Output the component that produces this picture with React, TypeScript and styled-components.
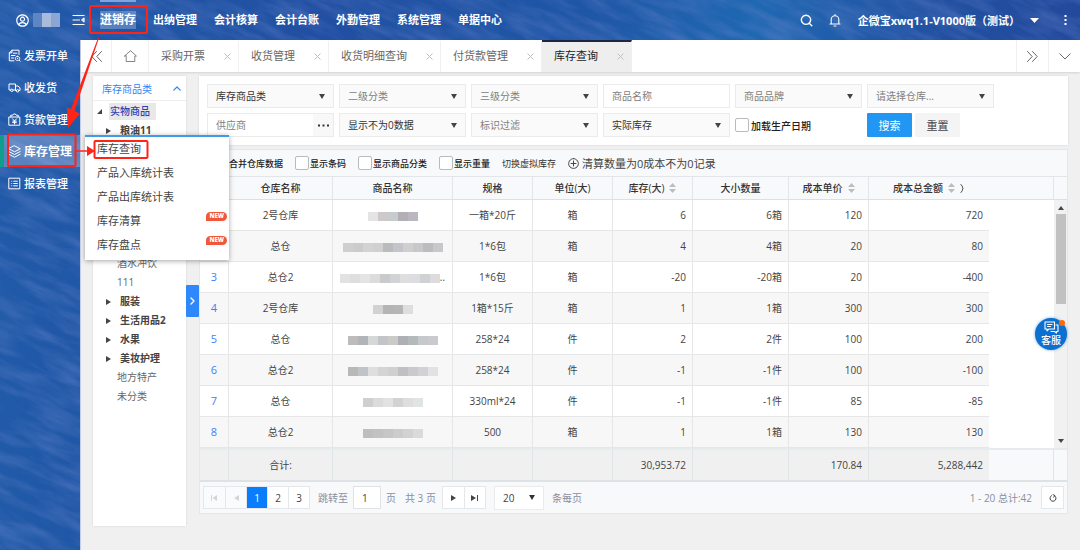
import React from "react";
import styled, { createGlobalStyle, css } from "styled-components";

const Global = createGlobalStyle`
  *, *::before, *::after { box-sizing: border-box; }
  body { margin: 0; background: #f0f0f0; }
  body, button, input, select { font-family: "Open Sans", "Noto Sans CJK SC", sans-serif; font-size: 10px; color: #444; }
  button, input, select { margin: 0; padding: 0; border: 0; border-radius: 0; background: none; outline: none; }
  ul { list-style: none; margin: 0; padding: 0; }
  a { color: inherit; text-decoration: none; }
  svg { display: block; flex: none; }
`;

/* ---------- shell ---------- */
const Shell = styled.div`
  position: relative;
  min-height: 100vh;
  display: flex;
  flex-direction: column;
  overflow: hidden;
`;
const Backdrop = styled.svg`
  position: absolute;
  inset: 0;
  width: 100%;
  height: 100%;
`;
const Header = styled.header`
  position: relative;
  height: 40px;
  display: flex;
  align-items: center;
  padding: 0 10px 0 16px;
  color: #fff;
  font-size: 11px;
  font-weight: 700;
`;
const IconButton = styled.button<{ $gap?: number }>`
  display: flex;
  color: inherit;
  margin-left: ${(p) => p.$gap ?? 0}px;
`;
const UserName = styled.span`
  display: flex;
  margin: 0 12px 0 4px;
`;
const Nav = styled.nav`
  flex: 1;
  display: flex;
  align-items: center;
  gap: 17px;
  margin-left: 15px;
  height: 100%;
`;
const NavLink = styled.a<{ $active?: boolean }>`
  display: flex;
  align-items: center;
  height: 100%;
  white-space: nowrap;
  line-height: 18px;
  ${(p) =>
    p.$active &&
    css`
      font-size: 12px;
      border-top: 2px solid #7fa3dc;
      padding-bottom: 2px;
      span { background: rgba(150, 180, 225, 0.45); }
    `}
`;
const Account = styled.button`
  display: flex;
  align-items: center;
  gap: 10px;
  margin: 0 22px 0 17px;
  color: #fff;
  font-size: 11px;
  font-weight: 700;
  white-space: nowrap;
`;
const Body = styled.div`
  position: relative;
  flex: 1;
  display: flex;
`;
const Sidebar = styled.nav`
  position: relative;
  z-index: 2;
  width: 80px;
  flex: none;
  margin-top: -1px;
`;
const SideLink = styled.a<{ $active?: boolean }>`
  display: flex;
  align-items: center;
  gap: 3px;
  height: 32px;
  padding-left: 8px;
  color: #fff;
  font-size: 11px;
  font-weight: 500;
  white-space: nowrap;
  ${(p) =>
    p.$active &&
    css`
      padding-left: 4px;
      border-left: 4px solid #0f9d8c;
      background: rgba(255, 255, 255, 0.25);
      font-size: 12px;
      font-weight: 700;
    `}
`;
const Flyout = styled.ul`
  position: absolute;
  left: 85px;
  top: 96px;
  width: 144px;
  padding-bottom: 3px;
  background: #fff;
  border-top: 2px solid #3f9be6;
  box-shadow: 0 1px 5px rgba(0, 0, 0, 0.35);
`;
const FlyoutLink = styled.a`
  display: flex;
  justify-content: space-between;
  align-items: center;
  height: 24px;
  padding: 0 2px 2px 12px;
  font-size: 11px;
  color: #444;
`;
const NewBadge = styled.span`
  height: 9px;
  margin-bottom: 8px;
  padding: 0 3px;
  border-radius: 5px 5px 5px 0;
  background: #f0573a;
  color: #fff;
  font-size: 6px;
  line-height: 9px;
  font-weight: 800;
`;

/* ---------- tabs ---------- */
const Main = styled.main`
  flex: 1;
  min-width: 0;
  background: #f0f0f0;
  border-left: 1px solid #c5cfe4;
`;
const TabBar = styled.div`
  display: flex;
  height: 32px;
  background: #fff;
  box-shadow: 0 1px 2px rgba(0, 0, 0, 0.12);
`;
const TabTool = styled.button<{ $width: number; $side: "left" | "right" }>`
  width: ${(p) => p.$width}px;
  display: flex;
  align-items: center;
  justify-content: center;
  color: #666;
  border-${(p) => p.$side}: 1px solid #f0f0f0;
`;
const Tab = styled.div<{ $active?: boolean }>`
  display: flex;
  align-items: center;
  gap: 19px;
  padding: 0 7px 2px 12px;
  border-right: 1px solid #f0f0f0;
  border-top: 2px solid ${(p) => (p.$active ? "#20263f" : "transparent")};
  background: ${(p) => (p.$active ? "#eee" : "#fff")};
  color: ${(p) => (p.$active ? "#222" : "#666")};
  font-size: 11px;
  line-height: 16px;
  white-space: nowrap;
  button { color: #c0c0c0; padding: 0; }
`;
const Grow = styled.div`
  flex: 1;
`;

/* ---------- work area ---------- */
const Work = styled.div`
  display: flex;
  align-items: flex-start;
  padding: 4px 12px 0;
`;
const Tree = styled.aside`
  width: 93px;
  flex: none;
  height: 450px;
  background: #fff;
  box-shadow: 0 0 2px rgba(0, 0, 0, 0.12);
`;
const TreeHead = styled.button`
  width: 100%;
  height: 25px;
  display: flex;
  align-items: center;
  justify-content: space-between;
  padding: 0 5px 0 9px;
  border-bottom: 1px solid #eee;
  color: #2f86f6;
`;
const TreeRow = styled.li<{ $kind: "root" | "branch" | "leaf" }>`
  height: 19px;
  display: flex;
  align-items: center;
  line-height: 17px;
  padding-left: ${(p) => ({ root: 4, branch: 13, leaf: 24 })[p.$kind]}px;
  gap: ${(p) => (p.$kind === "root" ? 7 : 9)}px;
  font-weight: ${(p) => (p.$kind === "branch" ? 700 : 400)};
  color: ${(p) => (p.$kind === "leaf" ? "#666" : "#444")};
`;
const TreeList = styled.ul`
  padding-top: 1px;
`;
const Selected = styled.span`
  padding: 0 6px 0 1px;
  background: #e8e8e8;
  color: #3240b4;
  font-weight: 500;
`;
const TreeGap = styled.li`
  height: 114px;
`;
const Expander = styled.button`
  width: 13px;
  height: 32px;
  flex: none;
  margin-top: 209px;
  display: flex;
  align-items: center;
  justify-content: center;
  background: #2f88fb;
  color: #fff;
  border-radius: 1px;
`;
const Content = styled.div`
  flex: 1;
  min-width: 0;
`;
const Filters = styled.form`
  display: grid;
  grid-template-columns: repeat(6, 127px);
  column-gap: 5px;
  row-gap: 5px;
  padding: 8px;
  background: #fff;
  box-shadow: 0 0 2px rgba(0, 0, 0, 0.12);
`;
const FieldBox = styled.div<{ $plain?: boolean }>`
  position: relative;
  height: 24px;
  display: flex;
  align-items: center;
  border: 1px solid #ebebeb;
  background: ${(p) => (p.$plain ? "#fff" : "#fafafa")};
  select, input { flex: 1; min-width: 0; height: 100%; padding-left: 8px; appearance: none; }
  input::placeholder { color: #808080; opacity: 1; }
  > svg { position: absolute; right: 8px; pointer-events: none; }
`;
const FilterSelect = styled.select<{ $muted?: boolean }>`
  color: ${(p) => (p.$muted ? "#808080" : "#333")};
`;
const MoreButton = styled.button`
  width: 20px;
  height: 100%;
  display: flex;
  align-items: center;
  justify-content: center;
  background: #f8f8f8;
  color: #333;
`;
const CheckLabel = styled.label<{ $large?: boolean }>`
  display: flex;
  align-items: center;
  gap: ${(p) => (p.$large ? 2 : 1)}px;
  font-size: ${(p) => (p.$large ? 10 : 9)}px;
  font-weight: 500;
  color: #222;
  white-space: nowrap;
`;
const Check = styled.input`
  appearance: none;
  width: 14px;
  height: 14px;
  border: 1px solid #bbb;
  border-radius: 2px;
  background: #fff;
`;
const Actions = styled.div`
  display: flex;
  gap: 3px;
`;
const Action = styled.button<{ $primary?: boolean }>`
  width: 45px;
  height: 24px;
  border-radius: 1px;
  font-size: 11px;
  background: ${(p) => (p.$primary ? "#2196f3" : "#f4f4f4")};
  color: ${(p) => (p.$primary ? "#fff" : "#444")};
`;

/* ---------- grid ---------- */
const Card = styled.section`
  margin-top: 4px;
  border: 1px solid #e3e7ea;
  background: #f8f9fb;
`;
const Toolbar = styled.div`
  height: 26px;
  display: flex;
  align-items: center;
  gap: 12px;
  padding-left: 14px;
`;
const TextButton = styled.button`
  font-size: 9px;
  color: #333;
`;
const ClearButton = styled.button`
  display: flex;
  align-items: center;
  gap: 3px;
  font-size: 11px;
  color: #444;
  white-space: nowrap;
`;
const Grid = styled.table`
  width: 100%;
  table-layout: fixed;
  border-collapse: separate;
  border-spacing: 0;
`;
const Th = styled.th<{ $edge?: boolean }>`
  height: 24px;
  padding: 0;
  border-top: 1px solid #e2e6ea;
  border-bottom: 1px solid #dcdfe3;
  border-right: ${(p) => (p.$edge ? "0" : "1px solid #e2e6ea")};
  background: #f8f9fa;
  font-weight: 500;
  color: #333;
`;
const ThInner = styled.span`
  display: flex;
  align-items: center;
  justify-content: center;
  gap: 5px;
  line-height: 14px;
`;
type Align = "center" | "right";
const Td = styled.td<{ $align?: Align; $edge?: boolean; $odd?: boolean }>`
  height: 31px;
  padding: 0 6px;
  text-align: ${(p) => p.$align ?? "center"};
  border-right: ${(p) => (p.$edge ? "0" : "1px solid #e4e6e8")};
  border-bottom: 1px solid #e6e6e6;
  background: ${(p) => (p.$odd ? "#f7f7f7" : "#fff")};
  line-height: 14px;
`;
const IndexTd = styled(Td)`
  color: #3f7ff5;
  font-size: 11px;
`;
const Blank = styled.td`
  background: #fff;
  padding: 0;
`;
const ScrollCell = styled.td`
  padding: 0;
  background: #f1f1f1;
  vertical-align: top;
`;
const ScrollTrack = styled.div`
  height: 248px;
  display: flex;
  flex-direction: column;
  align-items: center;
  padding: 6px 0 5px;
`;
const Thumb = styled.div`
  width: 10px;
  height: 90px;
  margin: 4px 0 auto;
  background: #c1c1c1;
`;
const FootTd = styled.td<{ $align?: Align; $edge?: boolean; $light?: boolean }>`
  height: 34px;
  padding: 0 6px;
  text-align: ${(p) => p.$align ?? "center"};
  border-top: 2px solid #e6ebed;
  border-bottom: 2px solid #dfe2e4;
  border-right: ${(p) => (p.$edge ? "0" : "1px solid #e0e5e8")};
  background: ${(p) => (p.$light ? "#f8f9fb" : "#f0f0f0")};
  line-height: 14px;
`;
const Mosaic = styled.span`
  display: inline-flex;
  vertical-align: middle;
`;
const Tile = styled.span<{ $c: string; $h?: number }>`
  width: ${(p) => (p.$h ? 9 : 10)}px;
  height: ${(p) => p.$h ?? 9}px;
  background: ${(p) => p.$c};
`;

/* ---------- pager ---------- */
const Pager = styled.footer`
  height: 31px;
  display: flex;
  align-items: center;
  padding: 0 3px;
  color: #8a8fa0;
  white-space: nowrap;
`;
const PageGroup = styled.div`
  display: flex;
  border: 1px solid #e5e8eb;
  background: #fff;
`;
const PageButton = styled.button<{ $active?: boolean }>`
  width: 21px;
  height: 21px;
  display: flex;
  align-items: center;
  justify-content: center;
  color: ${(p) => (p.$active ? "#fff" : "#444")};
  background: ${(p) => (p.$active ? "#0a7dfc" : "#fff")};
  & + & { border-left: 1px solid #e5e8eb; }
  &:disabled { color: #d5d5d5; background: #fafbfc; }
`;
const Jump = styled.label`
  display: flex;
  align-items: center;
  gap: 5px;
  margin: 0 9px 0 8px;
`;
const JumpInput = styled.input`
  width: 28px;
  height: 23px;
  padding-left: 8px;
  border: 1px solid #e0e3e6;
  background: #fff;
`;
const SizeLabel = styled.label`
  display: flex;
  align-items: center;
  gap: 8px;
  margin-left: 8px;
`;
const SizeBox = styled(FieldBox)`
  width: 50px;
  background: #fff;
  color: #333;
`;
const TotalPages = styled.span`
  margin-right: 6px;
`;
const Range = styled.span`
  margin: 0 9px 0 auto;
`;

/* ---------- overlays ---------- */
const Service = styled.button`
  position: absolute;
  right: 13px;
  top: 318px;
  width: 32px;
  height: 32px;
  border-radius: 50%;
  background: #0b70cf;
  box-shadow: 0 0 3px rgba(11, 112, 207, 0.6);
  color: #fff;
  font-size: 10px;
  line-height: 12px;
  font-weight: 500;
  display: flex;
  flex-direction: column;
  align-items: center;
  padding-top: 3px;
`;
const Dot = styled.span`
  position: absolute;
  top: 2px;
  right: 2px;
  width: 6px;
  height: 6px;
  border-radius: 50%;
  background: #ff6a00;
`;
const Marks = styled.svg`
  position: absolute;
  left: 0;
  top: 0;
  z-index: 5;
  pointer-events: none;
`;

/* ---------- icons ---------- */
const Stroke = ({ w, h, d, sw = 1 }: { w: number; h: number; d: string; sw?: number }) => (
  <svg width={w} height={h} viewBox={`0 0 ${w} ${h}`} fill="none" stroke="currentColor" strokeWidth={sw} strokeLinecap="round" strokeLinejoin="round" aria-hidden="true">
    <path d={d} />
  </svg>
);
const Fill = ({ w, h, d }: { w: number; h: number; d: string }) => (
  <svg width={w} height={h} viewBox={`0 0 ${w} ${h}`} fill="currentColor" aria-hidden="true">
    <path d={d} />
  </svg>
);
const Caret = () => <Fill w={6} h={5} d="M0 0H6L3 5Z" />;
const Sort = () => (
  <svg width="7" height="10" viewBox="0 0 7 10" fill="#bdbdbd" aria-hidden="true">
    <path d="M0 4L3.5 0L7 4ZM0 6H7L3.5 10Z" />
  </svg>
);

const sideItems = [
  { label: "发票开单", d: "M11 5.500V1.200H4L1.300 3.800V11.800H6M4 1.200V3.800H1.300M5.500 4.200H9M3.500 6.500H7M3.500 9H5.500M9.500 7.200a2.200 2.200 0 1 0 .01 0M9.500 9.200v.4M11.200 11.200l1 1" },
  { label: "收发货", d: "M2.500 9H1V3h6.500v6H5M7.500 5h2.600l1.900 2v2.500h-1.200M7.500 9.500H8.400M2.500 9.300a1.250 1.250 0 1 0 2.500 0a1.250 1.250 0 1 0-2.500 0M8.300 9.800a1.250 1.250 0 1 0 2.500 0a1.250 1.250 0 1 0-2.500 0" },
  { label: "货款管理", d: "M1.200 4h10.600v8.200H1.200ZM2.800 4V2.200h2l.8-1.200h1.800l.8 1.200h2V4M4.500 5.800L6.500 8L8.500 5.800M4.700 8.200h3.600M4.700 9.600h3.600M6.500 8v3" },
  { label: "库存管理", d: "M6.500 .8L12.200 3.800L6.500 6.800L.8 3.800ZM.8 6.500L6.500 9.500L12.200 6.500M.8 9.200L6.500 12.200L12.200 9.200" },
  { label: "报表管理", d: "M1.200 1.200h10.600v10.600H1.200ZM3.700 4.200h.1M5.700 4.200h3.700M3.700 6.500h.1M5.700 6.500h3.700M3.700 8.800h.1M5.700 8.800h3.700" },
];
const flyoutItems = [
  { label: "库存查询" },
  { label: "产品入库统计表" },
  { label: "产品出库统计表" },
  { label: "库存清算", fresh: true },
  { label: "库存盘点", fresh: true },
];
const navItems = ["出纳管理", "会计核算", "会计台账", "外勤管理", "系统管理", "单据中心"];
const tabs = ["采购开票", "收货管理", "收货明细查询", "付货款管理", "库存查询"];

const rows = [
  { wh: "2号仓库", tiles: ["#e4e4e4", "#cfc8ca", "#c6cbcd", "#b3afb4", "#bab7c0"], spec: "一箱*20斤", unit: "箱", qty: "6", both: "6箱", price: "120", sum: "720" },
  { wh: "总仓", tiles: ["#cfcfcf", "#c9cbcd", "#d3d3d3", "#d0d0d0", "#b9bbbc", "#c4c5ca", "#cfcfcf", "#c6c8ca", "#bcbcbe", "#c8c8cb"], spec: "1*6包", unit: "箱", qty: "4", both: "4箱", price: "20", sum: "80" },
  { no: 3, wh: "总仓2", tiles: ["#e2e2e2", "#dedede", "#e4e4e4", "#dcdcdc", "#c9cacc", "#d2d3d7", "#dedede", "#dcdde0", "#d0d1d4", "#dcdcdc"], more: true, spec: "1*6包", unit: "箱", qty: "-20", both: "-20箱", price: "20", sum: "-400" },
  { no: 4, wh: "2号仓库", tiles: ["#d2d2d0", "#b4b4b5", "#b6b6b8", "#dedede"], spec: "1箱*15斤", unit: "箱", qty: "1", both: "1箱", price: "300", sum: "300" },
  { no: 5, wh: "总仓", tiles: ["#bdbcbb", "#b1b4b8", "#d6d8d8", "#c2c4c8", "#cacac6", "#aeb0b5", "#b3bab9", "#c6c8cc", "#cacace"], spec: "258*24", unit: "件", qty: "2", both: "2件", price: "100", sum: "200" },
  { no: 6, wh: "总仓2", tiles: ["#b8b8b6", "#c0c4c6", "#dedede", "#d4d4d2", "#d0d0d0", "#bfc0c4", "#cacace", "#d2d2d4", "#e2e2e2"], spec: "258*24", unit: "件", qty: "-1", both: "-1件", price: "100", sum: "-100" },
  { no: 7, wh: "总仓", tiles: ["#cfcfcf", "#dcdadc", "#e2e2e2", "#d2d3d4", "#dedede", "#e0e4e2"], spec: "330ml*24", unit: "件", qty: "-1", both: "-1件", price: "85", sum: "-85" },
  { no: 8, wh: "总仓2", tiles: ["#bebebe", "#c2c2c3", "#c6c6c6", "#cccccb", "#d2d2d2", "#dadadb"], spec: "500", unit: "箱", qty: "1", both: "1箱", price: "130", sum: "130" },
];
const columns = [
  { label: "仓库名称" },
  { label: "商品名称" },
  { label: "规格" },
  { label: "单位(大)" },
  { label: "库存(大)", sort: true },
  { label: "大小数量" },
  { label: "成本单价", sort: true },
  { label: "成本总金额", sort: true, more: true },
];
const widths = [29, 104, 120, 80, 80, 80, 96, 80, 120];

const Select = ({ label, muted }: { label: string; muted?: boolean }) => (
  <FieldBox>
    <FilterSelect $muted={muted} aria-label={label}>
      <option>{label}</option>
    </FilterSelect>
    <Caret />
  </FieldBox>
);

const Tiles = ({ colors }: { colors: string[] }) => (
  <Mosaic>
    {colors.map((c, i) => (
      <Tile key={i} $c={c} />
    ))}
  </Mosaic>
);

export default function App() {
  return (
    <Shell>
      <Global />
      <Backdrop aria-hidden="true">
        <defs>
          <linearGradient id="sea" x1="0" y1="0" x2="1" y2="0">
            <stop offset="0" stopColor="#205aa8" />
            <stop offset="0.3" stopColor="#214fa2" />
            <stop offset="0.55" stopColor="#1f57a7" />
            <stop offset="0.7" stopColor="#1f68b2" />
            <stop offset="0.87" stopColor="#2250a1" />
            <stop offset="1" stopColor="#23499c" />
          </linearGradient>
          <filter id="ripple" x="0" y="0" width="100%" height="100%">
            <feTurbulence type="fractalNoise" baseFrequency="0.02 0.09" numOctaves="5" seed="8" />
            <feColorMatrix values="0 0 0 0 0.12  0 0 0 0 0.22  0 0 0 0 0.58  2 0 0 0 -0.7" />
          </filter>
        </defs>
        <rect width="100%" height="100%" fill="url(#sea)" />
        <g transform="rotate(24)">
          <rect x="-100" y="-600" width="1500" height="1300" filter="url(#ripple)" opacity="0.45" />
        </g>
      </Backdrop>

      <Header>
        <IconButton aria-label="用户">
          <Stroke w={13} h={13} d="M6.500 .8a5.700 5.700 0 1 0 .01 0M6.500 3.200a2 2 0 1 0 .01 0M3 10.500c.8-2.600 6.200-2.600 7 0" sw={1.2} />
        </IconButton>
        <UserName>
          {["#5f86c4", "#a9bbdb", "#8ba6d2"].map((c) => (
            <Tile key={c} $c={c} $h={14} />
          ))}
        </UserName>
        <IconButton aria-label="菜单">
          <Stroke w={13} h={12} d="M1 1.500H12M1 6H7.500M1 10.500H12M12 4.200V7.800L9.800 6Z" sw={1.2} />
        </IconButton>
        <Nav>
          <NavLink href="#" $active>
            <span>进销存</span>
          </NavLink>
          {navItems.map((n) => (
            <NavLink href="#" key={n}>
              {n}
            </NavLink>
          ))}
        </Nav>
        <IconButton aria-label="搜索">
          <Stroke w={13} h={13} d="M6 1.200a4.600 4.600 0 1 0 .01 0M9.500 9.500L11.800 11.800" sw={1.4} />
        </IconButton>
        <IconButton aria-label="通知" $gap={16}>
          <Stroke w={12} h={13} d="M1 10H11M2.200 10V5.500a3.800 3.800 0 0 1 7.600 0V10M5 12H7M6 .6V1.500" sw={1.1} />
        </IconButton>
        <Account>
          企微宝xwq1.1-V1000版（测试）
          <Fill w={9} h={5} d="M0 0H9L4.500 5Z" />
        </Account>
        <IconButton aria-label="更多">
          <Fill w={9} h={12} d="M3.500 1h2v2h-2ZM3.500 5h2v2h-2ZM3.500 9h2v2h-2Z" />
        </IconButton>
      </Header>

      <Body>
        <Sidebar>
          {sideItems.map((s) => (
            <SideLink href="#" key={s.label} $active={s.label === "库存管理"}>
              <Stroke w={13} h={13} d={s.d} />
              {s.label}
            </SideLink>
          ))}
          <Flyout>
            {flyoutItems.map((f) => (
              <li key={f.label}>
                <FlyoutLink href="#">
                  {f.label}
                  {f.fresh && <NewBadge>NEW</NewBadge>}
                </FlyoutLink>
              </li>
            ))}
          </Flyout>
        </Sidebar>

        <Main>
          <TabBar>
            <TabTool $width={31} $side="right" aria-label="向左">
              <Stroke w={11} h={11} d="M5.500 .5L.8 5.500L5.500 10.500M10.500 .5L5.800 5.500L10.500 10.500" />
            </TabTool>
            <TabTool $width={37} $side="right" aria-label="首页">
              <Stroke w={13} h={12} d="M.6 6L6.500 .7L12.400 6H10.800V11.500H2.200V6Z" sw={0.8} />
            </TabTool>
            {tabs.map((t) => (
              <Tab key={t} $active={t === "库存查询"}>
                {t}
                <button aria-label={`关闭${t}`}>
                  <Stroke w={7} h={7} d="M.8 .8L6.200 6.200M6.200 .8L.8 6.200" />
                </button>
              </Tab>
            ))}
            <Grow />
            <TabTool $width={32} $side="left" aria-label="向右">
              <Stroke w={11} h={11} d="M.5 .5L5.200 5.500L.5 10.500M5.500 .5L10.200 5.500L5.500 10.500" />
            </TabTool>
            <TabTool $width={32} $side="left" aria-label="展开">
              <Stroke w={12} h={7} d="M.8 .8L6 6L11.200 .8" />
            </TabTool>
          </TabBar>

          <Work>
            <Tree>
              <TreeHead>
                库存商品类
                <Stroke w={8} h={5} d="M.8 4.200L4 1L7.200 4.200" sw={1.2} />
              </TreeHead>
              <TreeList>
                <TreeRow $kind="root">
                  <Fill w={5} h={5} d="M5 0V5H0Z" />
                  <Selected>实物商品</Selected>
                </TreeRow>
                <TreeRow $kind="branch">
                  <Fill w={5} h={6} d="M0 0L5 3L0 6Z" />
                  粮油11
                </TreeRow>
                <TreeGap aria-hidden="true" />
                <TreeRow $kind="leaf">酒水冲饮</TreeRow>
                <TreeRow $kind="leaf">111</TreeRow>
                {["服装", "生活用品2", "水果", "美妆护理"].map((t) => (
                  <TreeRow $kind="branch" key={t}>
                    <Fill w={5} h={6} d="M0 0L5 3L0 6Z" />
                    {t}
                  </TreeRow>
                ))}
                <TreeRow $kind="leaf">地方特产</TreeRow>
                <TreeRow $kind="leaf">未分类</TreeRow>
              </TreeList>
            </Tree>
            <Expander aria-label="展开侧栏">
              <Stroke w={5} h={8} d="M1 1L4 4L1 7" sw={1.4} />
            </Expander>

            <Content>
              <Filters onSubmit={(e) => e.preventDefault()}>
                <Select label="库存商品类" />
                <Select label="二级分类" muted />
                <Select label="三级分类" muted />
                <FieldBox $plain>
                  <input placeholder="商品名称" aria-label="商品名称" />
                </FieldBox>
                <Select label="商品品牌" muted />
                <Select label="请选择仓库..." muted />
                <FieldBox $plain>
                  <input placeholder="供应商" aria-label="供应商" />
                  <MoreButton type="button" aria-label="选择供应商">
                    <Fill w={11} h={3} d="M0 .5h2v2H0ZM4.500 .5h2v2h-2ZM9 .5h2v2H9Z" />
                  </MoreButton>
                </FieldBox>
                <Select label="显示不为0数据" />
                <Select label="标识过滤" muted />
                <Select label="实际库存" />
                <CheckLabel $large>
                  <Check type="checkbox" />
                  加载生产日期
                </CheckLabel>
                <Actions>
                  <Action $primary type="submit">
                    搜索
                  </Action>
                  <Action type="reset">重置</Action>
                </Actions>
              </Filters>

              <Card>
                <Toolbar>
                  {["合并仓库数据", "显示条码", "显示商品分类", "显示重量"].map((t) => (
                    <CheckLabel key={t}>
                      <Check type="checkbox" />
                      {t}
                    </CheckLabel>
                  ))}
                  <TextButton>切换虚拟库存</TextButton>
                  <ClearButton>
                    <Stroke w={11} h={11} d="M5.500 .6a4.900 4.900 0 1 0 .01 0M5.500 3V8M3 5.500H8" />
                    清算数量为0成本不为0记录
                  </ClearButton>
                </Toolbar>

                <Grid>
                  <colgroup>
                    {widths.map((w, i) => (
                      <col key={i} width={w} />
                    ))}
                    <col />
                    <col width={13} />
                  </colgroup>
                  <thead>
                    <tr>
                      <Th />
                      {columns.map((c) => (
                        <Th key={c.label} $edge={c.more}>
                          <ThInner>
                            {c.label}
                            {c.sort && <Sort />}
                            {c.more && <Stroke w={5} h={9} d="M1 .5Q5 4.500 1 8.500" sw={0.9} />}
                          </ThInner>
                        </Th>
                      ))}
                      <Th />
                      <Th $edge />
                    </tr>
                  </thead>
                  <tbody>
                    {rows.map((r, i) => {
                      const odd = i % 2 === 1;
                      return (
                        <tr key={i}>
                          <IndexTd $odd={odd}>{r.no}</IndexTd>
                          <Td $odd={odd}>{r.wh}</Td>
                          <Td $odd={odd}>
                            <Tiles colors={r.tiles} />
                            {r.more && ".."}
                          </Td>
                          <Td $odd={odd}>{r.spec}</Td>
                          <Td $odd={odd}>{r.unit}</Td>
                          <Td $odd={odd} $align="right">{r.qty}</Td>
                          <Td $odd={odd} $align="right">{r.both}</Td>
                          <Td $odd={odd} $align="right">{r.price}</Td>
                          <Td $odd={odd} $align="right" $edge>{r.sum}</Td>
                          <Blank />
                          {i === 0 && (
                            <ScrollCell rowSpan={rows.length}>
                              <ScrollTrack>
                                <Fill w={6} h={4} d="M0 4L3 0L6 4Z" />
                                <Thumb />
                                <Fill w={6} h={4} d="M0 0H6L3 4Z" />
                              </ScrollTrack>
                            </ScrollCell>
                          )}
                        </tr>
                      );
                    })}
                  </tbody>
                  <tfoot>
                    <tr>
                      <FootTd />
                      <FootTd>合计:</FootTd>
                      <FootTd />
                      <FootTd />
                      <FootTd />
                      <FootTd $align="right">30,953.72</FootTd>
                      <FootTd />
                      <FootTd $align="right">170.84</FootTd>
                      <FootTd $align="right" $edge>5,288,442</FootTd>
                      <FootTd $light />
                      <FootTd $light $edge />
                    </tr>
                  </tfoot>
                </Grid>

                <Pager>
                  <PageGroup>
                    <PageButton disabled aria-label="首页">
                      <Fill w={7} h={6} d="M0 0H1V6H0ZM6 0V6L1.500 3Z" />
                    </PageButton>
                    <PageButton disabled aria-label="上一页">
                      <Fill w={5} h={6} d="M5 0V6L0 3Z" />
                    </PageButton>
                    <PageButton $active>1</PageButton>
                    <PageButton>2</PageButton>
                    <PageButton>3</PageButton>
                  </PageGroup>
                  <Jump>
                    跳转至
                    <JumpInput defaultValue="1" />
                    页
                  </Jump>
                  <TotalPages>共 3 页</TotalPages>
                  <PageGroup>
                    <PageButton aria-label="下一页">
                      <Fill w={5} h={6} d="M0 0V6L5 3Z" />
                    </PageButton>
                    <PageButton aria-label="末页">
                      <Fill w={7} h={6} d="M6 0H7V6H6ZM0 0V6L5 3Z" />
                    </PageButton>
                  </PageGroup>
                  <SizeLabel>
                    <SizeBox>
                      <select defaultValue="20">
                        <option>20</option>
                      </select>
                      <Caret />
                    </SizeBox>
                    条每页
                  </SizeLabel>
                  <Range>1 - 20 总计:42</Range>
                  <PageGroup>
                    <PageButton aria-label="刷新">
                      <Stroke w={8} h={8} d="M2.500 1.600A3 3 0 1 0 5.500 1.600M4 .6L5.800 1.500L4.800 3.200" />
                    </PageButton>
                  </PageGroup>
                </Pager>
              </Card>
            </Content>
          </Work>
        </Main>
      </Body>

      <Service>
        <Stroke w={15} h={13} d="M1 1h9.500v7H5L3 9.800V8H1ZM3.500 3.500H8M3.500 5.500H6.500M12 4h2v6.500H12.500V12L10.500 10.500H7" sw={1.1} />
        客服
        <Dot />
      </Service>

      <Marks width="240" height="180" viewBox="0 0 240 180" fill="none" stroke="#ff2318" strokeWidth="2" aria-hidden="true">
        <rect x="90" y="6" width="57" height="27" rx="1" />
        <rect x="8" y="134.500" width="67.500" height="31.500" rx="1" />
        <rect x="94.500" y="141" width="53" height="17" rx="1" />
        <path d="M99 38L98 38L71 109L67 107.500L68 128L80 113.500L74.500 111Z" fill="#ff2318" stroke="none" />
        <path d="M76 150.300H87V146L95 151L87 156V151.700H76Z" fill="#ff2318" stroke="none" />
      </Marks>
    </Shell>
  );
}
